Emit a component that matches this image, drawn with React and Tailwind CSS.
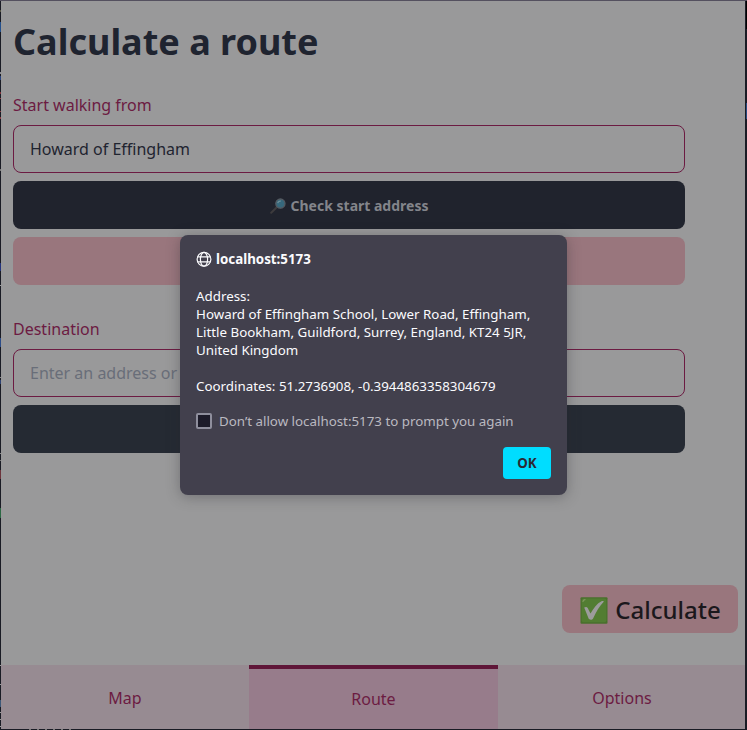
const specks = [
  [10, 2, '#554'], [22, 10, '#24508c'], [72, 2, '#8a8a90'], [76, 4, '#28427c'], [92, 2, '#7c3038'], [98, 1, '#8c3c42'],
  [111, 1, '#8c3c42'], [117, 2, '#8c3c42'], [169, 2, '#777'], [263, 8, '#24347c'], [285, 1, '#999'], [338, 9, '#2c4c88'],
  [377, 1, '#888'], [380, 4, '#2c4070'], [453, 1, '#888'], [460, 1, '#777'], [470, 9, '#6c343c'], [508, 10, '#2c6844'],
  [665, 1, '#999'], [684, 1, '#999'], [700, 7, '#3c5878'], [712, 1, '#999'], [719, 1, '#999'], [726, 1, '#999'],
];

function SearchGlyph() {
  return (
    <svg width="16" height="16" viewBox="0 0 16 16" className="shrink-0">
      <path d="M1.2 14.8 6.5 9.5" stroke="#3d3b3d" strokeWidth="2" strokeLinecap="round" />
      <circle cx="10.4" cy="5.6" r="4.6" fill="#36687c" stroke="#555b62" strokeWidth="1.3" />
      <path d="M7.8 5.2c.3-1.5 1.7-2.3 3-2" fill="none" stroke="#71909a" strokeWidth="1.2" />
    </svg>
  );
}

function CheckGlyph() {
  return (
    <svg width="28" height="27" viewBox="0 0 28 27" className="shrink-0">
      <rect x="0.5" y="0.3" width="27" height="26.4" rx="1" fill="#49702c" />
      <rect x="1.6" y="1.4" width="24.8" height="23.8" rx="2" fill="#527d32" />
      <path d="M3 4.5Q3 3 5 2.7" fill="none" stroke="#81985f" strokeWidth="1.2" strokeLinecap="round" />
      <path d="M4.2 10.6c1.2-.9 2.8-.9 3.5.3l2.8 5.7C13.5 11 17 6.5 21.5 4.2c1.2-.6 2.6-.3 2.2.6-4.2 4.3-7.3 9.6-10.6 16.6-.8 1.7-3.7 1.8-4.5.2z" fill="#9c9c9c" />
    </svg>
  );
}

function Globe() {
  return (
    <svg width="16" height="16" viewBox="0 0 16 16" fill="none" stroke="#fbfbfe" strokeWidth="1.2" className="shrink-0">
      <circle cx="8" cy="8.3" r="6.9" />
      <ellipse cx="8" cy="8.3" rx="3.6" ry="6.9" />
      <path d="M1.5 5.8h13M1.5 10.8h13" />
    </svg>
  );
}

export default function App() {
  return (
    <div className="relative h-[730px] w-[747px] overflow-hidden border-t border-t-[#54505f] bg-[#191b24] pl-px font-['Noto_Sans','Open_Sans',sans-serif] text-base">
      {specks.map(([y, h, c]) => (
        <i key={y} className="absolute left-0 w-px" style={{ top: y - 1, height: h, background: c }} />
      ))}
      <i className="absolute top-0 right-0 h-7 w-px bg-black" />
      <i className="absolute top-[102px] right-0 h-4 w-px bg-[#274a80]" />
      <i className="absolute bottom-0 left-[29px] h-px w-[46px] bg-[repeating-linear-gradient(90deg,#777_0_2px,#191b24_2px_8px)]" />

      <main className="flex h-[728px] w-[744px] flex-col bg-[#99999a]">
        <div className="flex h-[664px] flex-col px-3">
          <h1 className="mt-[21px] text-4xl font-bold whitespace-nowrap text-[#1f2430]">Calculate a route</h1>
          <label className="mt-[31px] flex h-6 items-center text-[#6c1b42]">Start walking from</label>
          <div className="mt-2 flex h-12 w-[672px] shrink-0 items-center rounded-lg border border-[#6c1b42] px-4 text-[#1f2430]">Howard of Effingham</div>
          <button className="mt-2 flex h-12 w-[672px] shrink-0 items-center justify-center gap-[5px] rounded-lg bg-[#20232d] pt-px text-sm font-bold text-[#83858b]">
            <SearchGlyph />Check start address
          </button>
          <div className="mt-2 h-12 w-[672px] shrink-0 rounded-lg bg-[#99767d]" />
          <label className="mt-8 flex h-6 items-center text-[#6c1b42]">Destination</label>
          <div className="mt-2 flex h-12 w-[672px] shrink-0 items-center rounded-lg border border-[#6c1b42] px-4 text-[#696e79]">Enter an address or</div>
          <div className="mt-2 h-12 w-[672px] shrink-0 rounded-lg bg-[#252a33]" />
          <button className="mt-auto mr-[-5px] mb-8 flex h-12 w-[176px] shrink-0 items-center justify-center gap-[7px] self-end rounded-lg bg-[#99767d] pt-0.5 pl-px text-2xl font-medium text-[#1b181c]">
            <CheckGlyph />Calculate
          </button>
        </div>
        <nav className="grid h-16 grid-cols-[248px_249px_247px] text-[#6c1b42]">
          <span className="flex items-center justify-center bg-[#978b92] pt-0.5">Map</span>
          <span className="flex items-center justify-center border-t-4 border-[#5f1638] bg-[#977c8b]">Route</span>
          <span className="flex items-center justify-center bg-[#978b92] pt-0.5 pl-px">Options</span>
        </nav>
      </main>

      <section role="dialog" className="absolute top-[234px] left-[180px] flex h-[260px] w-[387px] flex-col rounded-lg bg-[#42404d] px-4 text-[13.33px] leading-[18px] text-[#fbfbfe] shadow-[0_2px_14px_rgba(40,40,45,0.35)]">
        <header className="mt-[15px] flex items-center gap-1 font-bold"><Globe />localhost:5173</header>
        <p className="mt-[19px] whitespace-pre">{'Address:\nHoward of Effingham School, Lower Road, Effingham,\nLittle Bookham, Guildford, Surrey, England, KT24 5JR,\nUnited Kingdom\n\nCoordinates: 51.2736908, -0.3944863358304679'}</p>
        <label className="mt-[17px] flex items-center gap-[7px] text-[#bab9c0]">
          <span className="h-4 w-4 rounded-[2px] border-2 border-[#8f8f9d] bg-[#1c1b29]" />
          Don’t allow localhost:5173 to prompt you again
        </label>
        <button className="mt-[17px] h-8 w-12 self-end rounded bg-[#00ddff] font-bold text-[#2b2a33]">OK</button>
      </section>
    </div>
  );
}
